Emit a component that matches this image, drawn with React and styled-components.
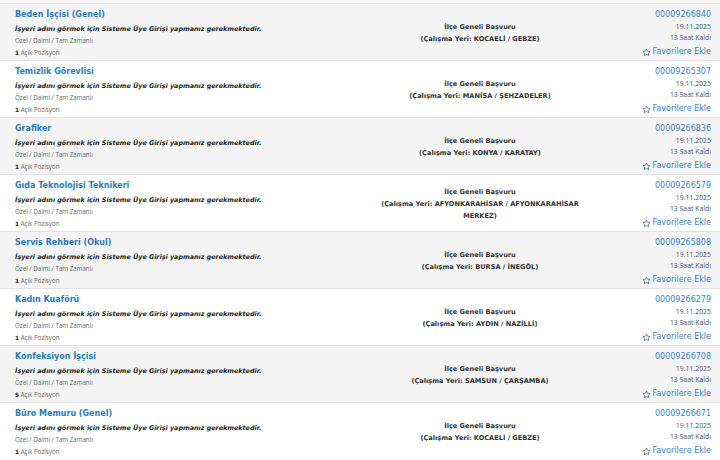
import React from "react";
import styled, { createGlobalStyle } from "styled-components";

const Global = createGlobalStyle`
  html, body { margin: 0; padding: 0; background: #ffffff; }
  body { font-family: "DejaVu Sans", Verdana, sans-serif; width: 720px; height: 460px; overflow: hidden; }
`;

const List = styled.div`
  display: flex;
  flex-direction: column;
  padding-top: 3px;
  background: #f7f7f7;
`;

const Row = styled.div`
  display: grid;
  grid-template-columns: 375px 210px 1fr;
  height: 57px;
  box-sizing: border-box;
  border-top: 1px solid #e2e2e2;
  background: ${(p) => (p.$alt ? "#ffffff" : "#f4f4f4")};
`;

const Left = styled.div`
  display: flex;
  flex-direction: column;
  padding: 5px 0 0 15px;
`;

const Title = styled.a`
  font-weight: bold;
  font-size: 8px;
  line-height: 12px;
  color: #2b7cb7;
  text-decoration: none;
  height: 13px;
`;

const Notice = styled.div`
  font-weight: bold;
  font-style: italic;
  font-size: 6.4px;
  line-height: 11px;
  color: #222;
  margin-top: 2px;
`;

const Meta = styled.div`
  font-family: "Open Sans", sans-serif;
  font-size: 6.2px;
  line-height: 12px;
  color: #666;
`;

const Count = styled.b`
  color: #222;
  font-family: "DejaVu Sans", sans-serif;
  font-size: 5.8px;
`;

const Center = styled.div`
  display: flex;
  flex-direction: column;
  justify-content: center;
  align-items: center;
  text-align: center;
  font-weight: bold;
  font-size: 6.6px;
  line-height: 12px;
  color: #333;
  padding-top: 1px;
`;

const Right = styled.div`
  display: flex;
  flex-direction: column;
  align-items: flex-end;
  padding: 5px 9px 0 0;
`;

const Code = styled.a`
  font-size: 8px;
  line-height: 12px;
  color: #3b84bf;
  text-decoration: none;
`;

const Small = styled.div`
  font-family: "Open Sans", sans-serif;
  font-size: 6.9px;
  line-height: 11px;
  color: #555;
`;

const Fav = styled.a`
  display: flex;
  align-items: center;
  gap: 2px;
  font-size: 8px;
  line-height: 12px;
  color: #3b84bf;
  text-decoration: none;
  margin-top: 3px;
`;

const Star = () => (
  <svg width="9" height="9" viewBox="0 0 24 24" fill="none" stroke="#5a6f80" strokeWidth="2.2" strokeLinejoin="round">
    <path d="M12 2.5l2.9 6.1 6.6.8-4.9 4.6 1.3 6.6L12 17.3l-5.9 3.3 1.3-6.6-4.9-4.6 6.6-.8z" />
  </svg>
);

const jobs = [
  ["Beden İşçisi (Genel)", "KOCAELİ / GEBZE", "00009266840", 1],
  ["Temizlik Görevlisi", "MANİSA / ŞEHZADELER", "00009265307", 1],
  ["Grafiker", "KONYA / KARATAY", "00009266836", 1],
  ["Gıda Teknolojisi Teknikeri", "AFYONKARAHİSAR / AFYONKARAHİSAR MERKEZ", "00009266579", 1],
  ["Servis Rehberi (Okul)", "BURSA / İNEGÖL", "00009265808", 1],
  ["Kadın Kuaförü", "AYDIN / NAZİLLİ", "00009266279", 1],
  ["Konfeksiyon İşçisi", "SAMSUN / ÇARŞAMBA", "00009266708", 5],
  ["Büro Memuru (Genel)", "KOCAELİ / GEBZE", "00009266671", 1],
];

export default function App() {
  return (
    <>
      <Global />
      <List>
        {jobs.map(([title, place, code, count], i) => (
          <Row key={code} $alt={i % 2 === 1}>
            <Left>
              <Title href="#">{title}</Title>
              <Notice>İşyeri adını görmek için Sisteme Üye Girişi yapmanız gerekmektedir.</Notice>
              <Meta>Özel / Daimi / Tam Zamanlı</Meta>
              <Meta>
                <Count>{count}</Count> Açık Pozisyon
              </Meta>
            </Left>
            <Center>
              <div>İlçe Geneli Başvuru</div>
              <div>(Çalışma Yeri: {place})</div>
            </Center>
            <Right>
              <Code href="#">{code}</Code>
              <Small>19.11.2025</Small>
              <Small>13 Saat Kaldı</Small>
              <Fav href="#">
                <Star />
                Favorilere Ekle
              </Fav>
            </Right>
          </Row>
        ))}
      </List>
    </>
  );
}
